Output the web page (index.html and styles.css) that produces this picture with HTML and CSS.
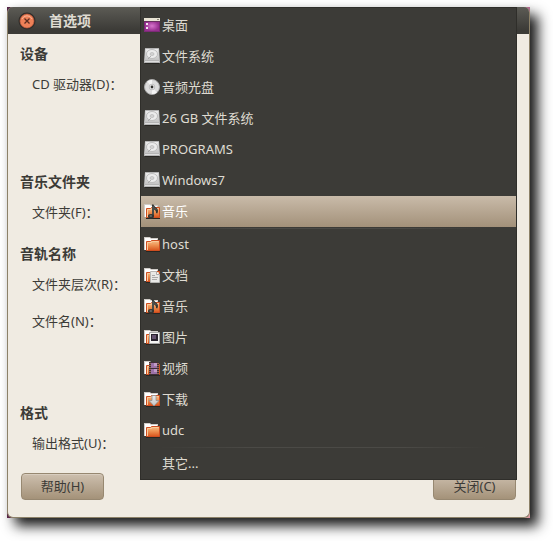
FILE: index.html
```html
<!DOCTYPE html>
<html lang="zh-CN">
<head>
<meta charset="utf-8">
<title>首选项</title>
<link rel="stylesheet" href="styles.css">
</head>
<body>
<svg class="defs" aria-hidden="true">
  <defs>
    <linearGradient id="orange" x1="0" y1="0" x2="0" y2="1"><stop offset="0" stop-color="#f6c08c"/><stop offset=".45" stop-color="#ee9454"/><stop offset="1" stop-color="#d9541c"/></linearGradient>
    <linearGradient id="silver" x1="0" y1="0" x2="0" y2="1"><stop offset="0" stop-color="#ececec"/><stop offset="1" stop-color="#c4c4c4"/></linearGradient>
    <radialGradient id="purple"><stop offset="0" stop-color="#d775cd"/><stop offset="1" stop-color="#96308f"/></radialGradient>
    <symbol id="folder" viewBox="0 0 16 16">
      <path d="M0 1h6l1 1h7v12H0z" fill="#d0ccc8"/>
      <path d="M1 2h5l1 1h6v11H1z" fill="#fff"/>
      <path d="M2 15.500h14" stroke="#272622"/>
      <path d="M2.500 5.500h4l1-1h8v10h-13z" fill="url(#orange)" stroke="#cf4e20"/>
      <path d="M3.500 14V6.500h4l1-1h6" fill="none" stroke="#f9cc9b"/>
    </symbol>
    <symbol id="disk" viewBox="0 0 16 16">
      <path d="M1 0h14l1 12v3H0v-3z" fill="#b4b4b4"/>
      <path d="M1.500 1h13l.5 11H1z" fill="url(#silver)"/>
      <ellipse cx="8" cy="6" rx="5.500" ry="4.500" fill="#ececec" stroke="#b4b4b4" stroke-width=".8"/>
      <ellipse cx="8" cy="6" rx="2" ry="1.500" fill="#d4d4d4" stroke="#b0b0b0" stroke-width=".6"/>
      <path d="M4 11l3-3" stroke="#a0a0a0" stroke-width=".8"/>
      <path d="M1 13.500h14" stroke="#dedede"/><path d="M1 15.500h14" stroke="#272622"/>
    </symbol>
    <symbol id="note" viewBox="0 0 16 16">
      <path d="M8 13V1.500h1.500c.5 2.500 4.500 3 4.500 6.500 0 1-.3 1.800-.8 2.500L12 10c.3-2-.8-3-2-3.500V13z" fill="#343532"/>
      <path d="M9 3v9M10 4.500l2.500 2.500" fill="none" stroke="#777b78" stroke-width=".7"/>
      <ellipse cx="7" cy="13.200" rx="3" ry="2.300" fill="#343532"/>
      <ellipse cx="6.800" cy="13" rx="1.400" ry=".8" fill="#777b78"/>
    </symbol>
  </defs>
</svg>
<div class="backdrop">
  <main class="dialog">
    <header class="titlebar">
      <button class="close" type="button" aria-label="关闭">
        <svg viewBox="0 0 18 18"><circle cx="9" cy="9" r="8.500" fill="#2d2c29"/><circle cx="9" cy="9" r="7" fill="#ee8158" stroke="#c4593a" stroke-width=".6"/><path d="M4 7a5.500 5.500 0 0 1 10 0" fill="none" stroke="#f8b294"/><path d="M6.500 6.500l5 5m0-5l-5 5" stroke="#5c2d20" stroke-width="1.300"/></svg>
      </button>
      <h1>首选项</h1>
    </header>
    <div class="content">
      <section class="group group-device">
        <h2>设备</h2>
        <p>CD 驱动器(D)：</p>
      </section>
      <section class="group">
        <h2>音乐文件夹</h2>
        <p>文件夹(F)：</p>
      </section>
      <section class="group group-names">
        <h2>音轨名称</h2>
        <p>文件夹层次(R)：</p>
        <p>文件名(N)：</p>
      </section>
      <section class="group">
        <h2>格式</h2>
        <p>输出格式(U)：</p>
      </section>
      <footer class="actions">
        <button class="button" type="button">帮助(H)</button>
        <button class="button" type="button">关闭(C)</button>
      </footer>
    </div>
    <div class="menu" role="menu">
      <button class="item" type="button" role="menuitem">
        <svg viewBox="0 0 16 16"><path d="M0 1h16v14H0z" fill="#7c2a77"/><path d="M1 4h14v10H1z" fill="url(#purple)"/><path d="M0 1h16v3H0z" fill="#e9e4d5"/><path d="M0 4.500h16" stroke="#66315f"/><path d="M13 2.500h2" stroke="#8d897c"/><path d="M2 6h2v2H2zM2 10h2v2H2z" fill="#f1e5ee"/></svg>桌面</button>
      <button class="item" type="button" role="menuitem"><svg><use href="#disk"/></svg>文件系统</button>
      <button class="item" type="button" role="menuitem">
        <svg viewBox="0 0 16 16"><circle cx="8" cy="8" r="7.500" fill="#dcdcdc" stroke="#aaa"/><path d="M8 8L3 2.500A7 7 0 0 1 8 1zM8 8l5 5.500A7 7 0 0 1 8 15z" fill="#f4f4f4"/><circle cx="8" cy="8" r="2.800" fill="#efefef" stroke="#aaa" stroke-width=".7"/><circle cx="8" cy="8" r="1.400" fill="#30302d"/></svg>音频光盘</button>
      <button class="item" type="button" role="menuitem"><svg><use href="#disk"/></svg>26 GB 文件系统</button>
      <button class="item" type="button" role="menuitem"><svg><use href="#disk"/></svg>PROGRAMS</button>
      <button class="item" type="button" role="menuitem"><svg><use href="#disk"/></svg>Windows7</button>
      <button class="item selected" type="button" role="menuitem"><svg><use href="#folder"/><use href="#note"/></svg>音乐</button>
      <div class="separator" role="separator"></div>
      <button class="item" type="button" role="menuitem"><svg><use href="#folder"/></svg>host</button>
      <button class="item" type="button" role="menuitem">
        <svg viewBox="0 0 16 16"><use href="#folder"/><path d="M6.500 4.500h6l3 3v8h-9z" fill="#e9e9e7" stroke="#b7b7b4"/><path d="M12.500 4.500v3h3" fill="#fff" stroke="#aaa"/><path d="M8 8.500h3M8 10.500h6M8 12.500h5" stroke="#aaa"/></svg>文档</button>
      <button class="item" type="button" role="menuitem"><svg><use href="#folder"/><use href="#note"/></svg>音乐</button>
      <button class="item" type="button" role="menuitem">
        <svg viewBox="0 0 16 16"><use href="#folder"/><path d="M5.500 3.500h10v11h-10z" fill="#f3f3f1" stroke="#aaa"/><path d="M7 5h7v7H7z" fill="#29232e"/><path d="M8 6h4v4H8z" fill="#65536f"/></svg>图片</button>
      <button class="item" type="button" role="menuitem">
        <svg viewBox="0 0 16 16"><use href="#folder"/><path d="M5 2h10v13H5z" fill="#403038"/><path d="M7 3h6v5H7zM7 9h6v5H7z" fill="#9b72a8"/><path d="M10 3h3v3h-3zM10 9h3v3h-3z" fill="#c09bc8"/><path d="M6 3v12M14 3v12" stroke="#e6a16d" stroke-dasharray="1 1"/></svg>视频</button>
      <button class="item" type="button" role="menuitem">
        <svg viewBox="0 0 16 16"><use href="#folder"/><path d="M8 4.500h4v5h3l-5 5.500-5-5.500h3z" fill="url(#silver)" stroke="#929292" stroke-width=".8"/></svg>下载</button>
      <button class="item" type="button" role="menuitem"><svg><use href="#folder"/></svg>udc</button>
      <div class="separator" role="separator"></div>
      <button class="item plain" type="button" role="menuitem">其它...</button>
    </div>
  </main>
</div>
</body>
</html>
```
FILE: styles.css
```css
* {
  box-sizing: border-box;
}

body {
  margin: 0;
  padding: 7px 23px 23px 7px;
  background: #fff;
  color: #3c3b37;
  font: 13px/20px "Noto Sans", "Noto Sans CJK SC", sans-serif;
}

button {
  font: inherit;
}

.defs {
  position: absolute;
  width: 0;
  height: 0;
}

.backdrop {
  background:
    linear-gradient(#552648, #552648) 0 0 / 50% 50% no-repeat,
    linear-gradient(#b0688d, #b0688d) 100% 0 / 50% 50% no-repeat,
    linear-gradient(#5a2648, #5a2648) 0 100% / 50% 50% no-repeat,
    #dd99a2;
  box-shadow: 8px 8px 12px rgba(0, 0, 0, 0.9), 0 0 7px rgba(0, 0, 0, 0.06);
}

.dialog {
  position: relative;
  border: solid #8c8168;
  border-width: 0 1px 1px;
  border-radius: 6px;
  background: #f0ebe2;
}

.titlebar {
  display: flex;
  align-items: center;
  gap: 13px;
  height: 27px;
  padding-left: 10px;
  border-radius: 5px 5px 0 0;
  background: linear-gradient(#5c5b55, #3c3b37 85%);
}

.titlebar h1 {
  margin: 0;
  color: #dfdbd2;
  font-size: 14px;
  line-height: 20px;
}

.close {
  width: 18px;
  height: 18px;
  padding: 0;
  border: 0;
  background: none;
}

.close svg {
  display: block;
}

.content {
  display: flex;
  flex-direction: column;
  gap: 11px;
  padding: 8px 13px 17px 12px;
}

.group h2 {
  margin: 0;
  font-size: 14px;
  line-height: 24px;
}

.group p {
  margin: 0;
  padding-left: 12px;
  line-height: 37px;
}

.group-device {
  padding-bottom: 56px;
}

.group-names {
  padding-bottom: 50px;
}

.actions {
  display: flex;
  justify-content: space-between;
  padding-left: 1px;
}

.button {
  width: 83px;
  height: 27px;
  padding: 0 0 2px;
  border: 1px solid #978871;
  border-radius: 4px;
  background: linear-gradient(#cdbfae, #a49279);
  box-shadow: inset 0 1px #d8cdbf;
  color: #3c3b37;
}

.menu {
  position: absolute;
  top: 0;
  right: 12px;
  left: 132px;
  padding: 2px 0 0;
  border: 1px solid #2f2e2a;
  background: #3c3b37;
}

.item {
  display: flex;
  align-items: center;
  gap: 2px;
  width: 100%;
  height: 31px;
  padding: 0 3px 2px;
  border: 0;
  background: none;
  color: #dfdbd2;
}

.item svg {
  width: 16px;
  height: 16px;
}

.selected {
  background: linear-gradient(#c9bba9, #a3917a);
  color: #fff;
}

.separator {
  height: 2px;
  background: linear-gradient(90deg, transparent 5%, #4b4a46 30%, #4b4a46 70%, transparent 92%) 0 1px / 100% 1px no-repeat;
}

.plain {
  padding-left: 21px;
}
```
